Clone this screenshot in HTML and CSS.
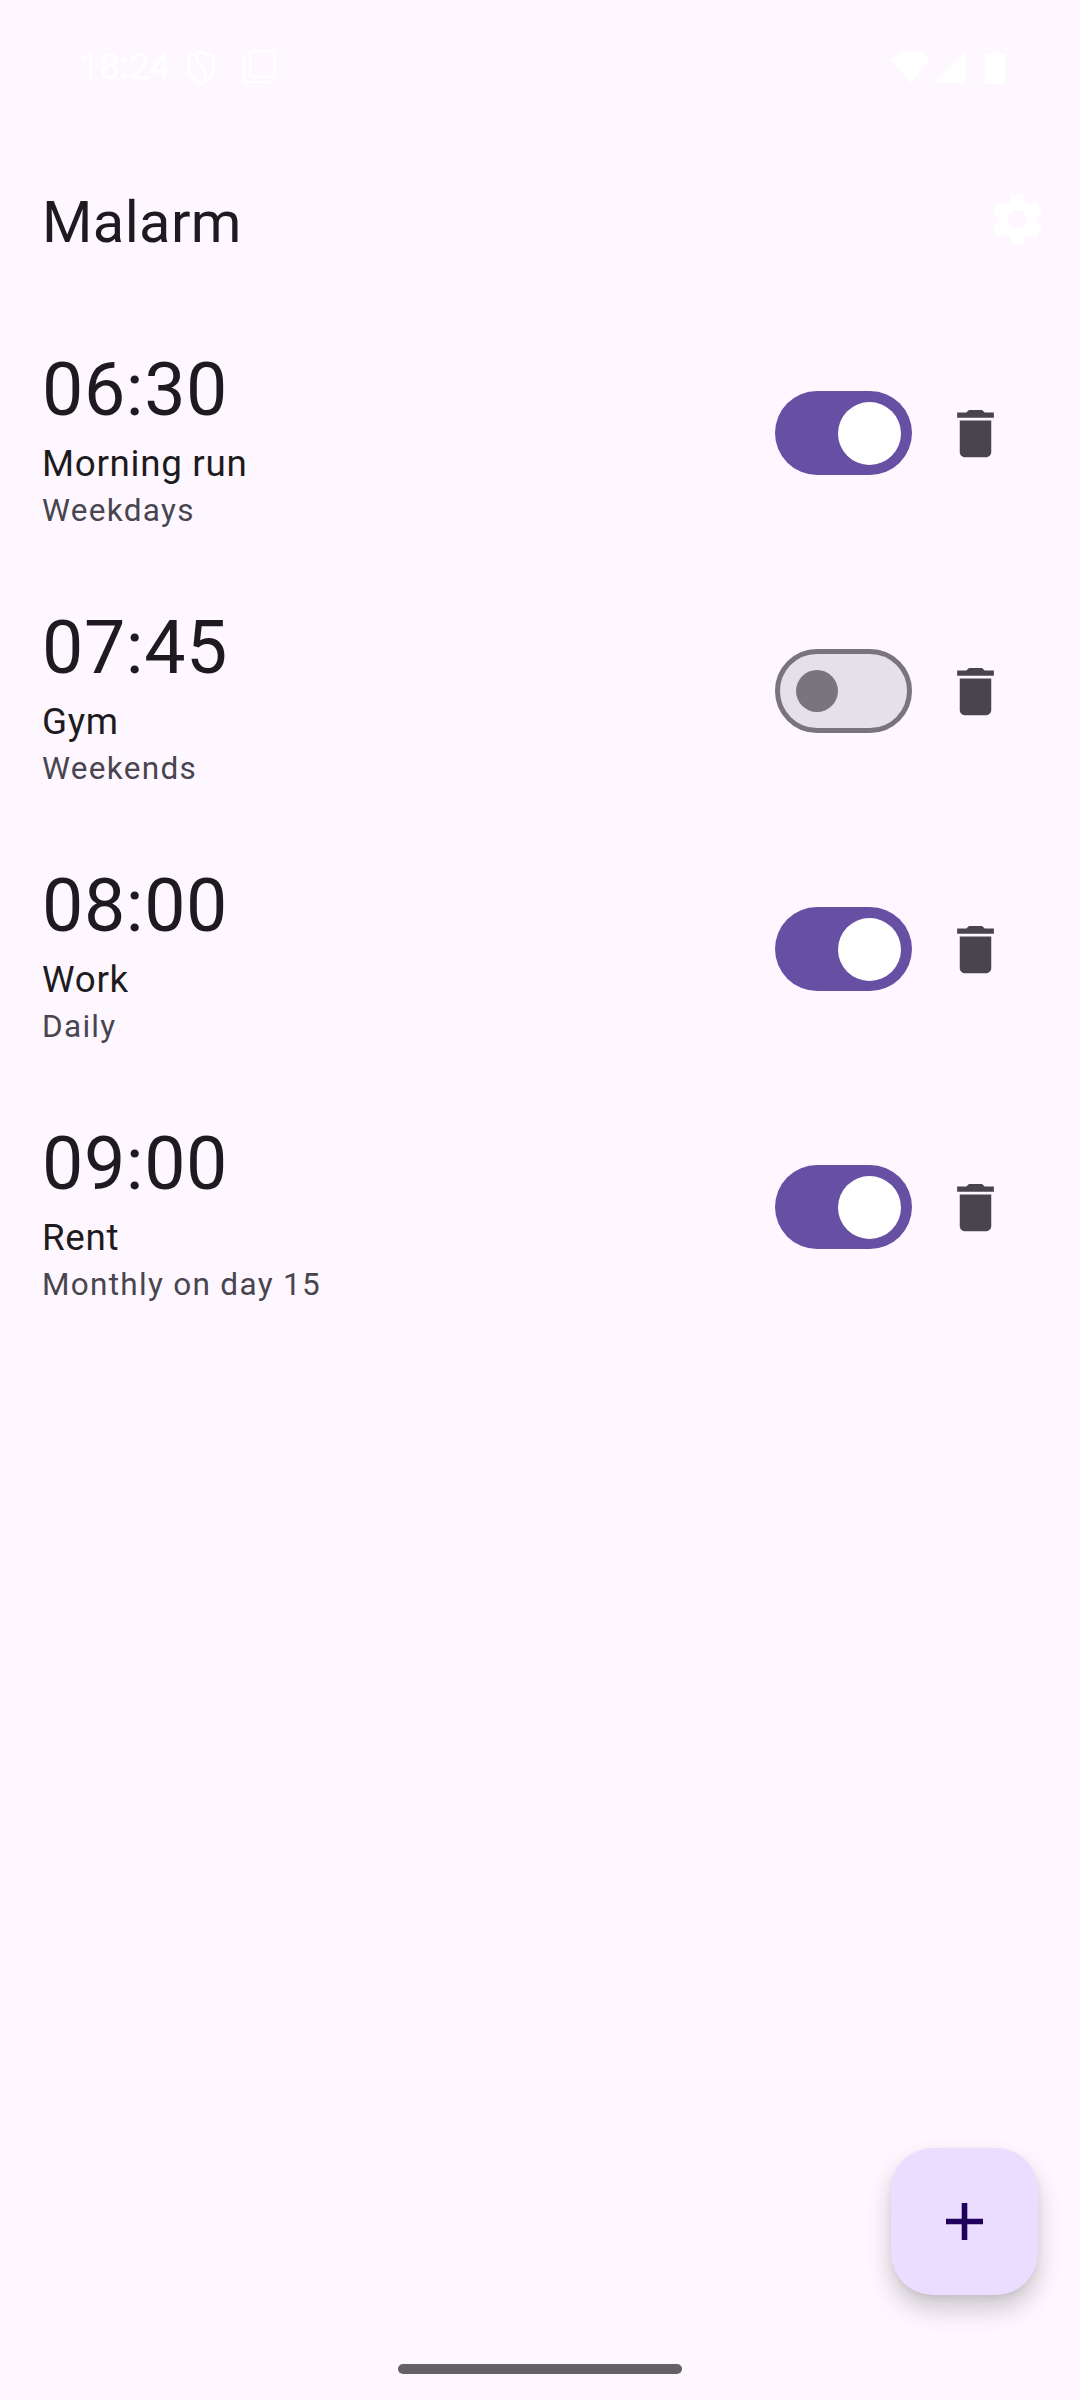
FILE: index.html
```html
<!DOCTYPE html>
<html lang="en">
<head>
    <meta charset="UTF-8">
    <meta name="viewport" content="width=device-width, initial-scale=1.0">
    <title>Malarm</title>
    <link rel="stylesheet" href="styles.css">
</head>
<body>
    <div class="screen">
        <div class="status-bar">
            <div class="status-left">
                <span class="status-time">18:24</span>
                <svg class="icon-shield" viewBox="0 0 28 35" fill="none" stroke="#fff" stroke-width="3">
                    <path d="M14 1.8 L26.5 6 V17 C26.5 25 21 31 14 33.2 C7 31 1.5 25 1.5 17 V6 Z"/>
                    <path d="M11 3 C8 8 9 12 14 16 C19 20 20 24 17 32"/>
                </svg>
                <svg class="icon-recents" viewBox="0 0 34 34" fill="none" stroke="#fff" stroke-width="2.6">
                    <rect x="8" y="1.5" width="24.5" height="25"/>
                    <path d="M2 6 V32 H28"/>
                </svg>
            </div>
            <div class="status-right">
                <svg class="icon-wifi" viewBox="0 0 39 32" fill="#fff"><path d="M0 9 C10 -3 29 -3 39 9 L19.5 32 Z"/></svg>
                <svg class="icon-signal" viewBox="0 0 33 32" fill="#fff"><path d="M33 0 V32 H0 Z"/></svg>
                <svg class="icon-battery" viewBox="0 0 20 33" fill="#fff"><path d="M6 0 H14 V3 H20 V33 H0 V3 H6 Z"/></svg>
            </div>
        </div>

        <div class="top-bar">
            <h1 class="app-title">Malarm</h1>
            <button class="icon-button">
                <svg class="icon-settings" viewBox="0 0 24 24" fill="#fff"><path d="M19.14 12.94c.04-.3.06-.61.06-.94 0-.32-.02-.64-.07-.94l2.03-1.58c.18-.14.23-.41.12-.61l-1.92-3.32c-.12-.22-.37-.29-.59-.22l-2.39.96c-.5-.38-1.03-.7-1.62-.94l-.36-2.54c-.04-.24-.24-.41-.48-.41h-3.84c-.24 0-.43.17-.47.41l-.36 2.54c-.59.24-1.13.57-1.62.94l-2.39-.96c-.22-.08-.47 0-.59.22L2.74 8.87c-.12.21-.08.47.12.61l2.03 1.58c-.05.3-.09.63-.09.94s.02.64.07.94l-2.03 1.58c-.18.14-.23.41-.12.61l1.92 3.32c.12.22.37.29.59.22l2.39-.96c.5.38 1.03.7 1.62.94l.36 2.54c.05.24.24.41.48.41h3.84c.24 0 .44-.17.47-.41l.36-2.54c.59-.24 1.13-.56 1.62-.94l2.39.96c.22.08.47 0 .59-.22l1.92-3.32c.12-.22.07-.47-.12-.61l-2.01-1.58zM12 15.6c-1.98 0-3.6-1.62-3.6-3.6s1.62-3.6 3.6-3.6 3.6 1.62 3.6 3.6-1.62 3.6-3.6 3.6z"/></svg>
            </button>
        </div>

        <div class="alarm-list">
            <div class="alarm-row">
                <div class="alarm-text">
                    <div class="alarm-time">06:30</div>
                    <div class="alarm-name">Morning run</div>
                    <div class="alarm-repeat">Weekdays</div>
                </div>
                <div class="switch switch-on"><span class="thumb"></span></div>
                <button class="icon-button">
                    <svg class="icon-delete" viewBox="0 0 24 24" fill="#49454f"><path d="M6 19c0 1.1.9 2 2 2h8c1.1 0 2-.9 2-2V7H6v12zM19 4h-3.5l-1-1h-5l-1 1H5v2h14V4z"/></svg>
                </button>
            </div>
            <div class="alarm-row">
                <div class="alarm-text">
                    <div class="alarm-time">07:45</div>
                    <div class="alarm-name">Gym</div>
                    <div class="alarm-repeat">Weekends</div>
                </div>
                <div class="switch switch-off"><span class="thumb"></span></div>
                <button class="icon-button">
                    <svg class="icon-delete" viewBox="0 0 24 24" fill="#49454f"><path d="M6 19c0 1.1.9 2 2 2h8c1.1 0 2-.9 2-2V7H6v12zM19 4h-3.5l-1-1h-5l-1 1H5v2h14V4z"/></svg>
                </button>
            </div>
            <div class="alarm-row">
                <div class="alarm-text">
                    <div class="alarm-time">08:00</div>
                    <div class="alarm-name">Work</div>
                    <div class="alarm-repeat">Daily</div>
                </div>
                <div class="switch switch-on"><span class="thumb"></span></div>
                <button class="icon-button">
                    <svg class="icon-delete" viewBox="0 0 24 24" fill="#49454f"><path d="M6 19c0 1.1.9 2 2 2h8c1.1 0 2-.9 2-2V7H6v12zM19 4h-3.5l-1-1h-5l-1 1H5v2h14V4z"/></svg>
                </button>
            </div>
            <div class="alarm-row">
                <div class="alarm-text">
                    <div class="alarm-time">09:00</div>
                    <div class="alarm-name">Rent</div>
                    <div class="alarm-repeat">Monthly on day 15</div>
                </div>
                <div class="switch switch-on"><span class="thumb"></span></div>
                <button class="icon-button">
                    <svg class="icon-delete" viewBox="0 0 24 24" fill="#49454f"><path d="M6 19c0 1.1.9 2 2 2h8c1.1 0 2-.9 2-2V7H6v12zM19 4h-3.5l-1-1h-5l-1 1H5v2h14V4z"/></svg>
                </button>
            </div>
        </div>

        <div class="nav-handle"></div>

        <button class="fab">
            <svg class="icon-add" viewBox="0 0 37 37" fill="#21005d"><path d="M15.7 0 H21.3 V15.7 H37 V21.3 H21.3 V37 H15.7 V21.3 H0 V15.7 H15.7 Z"/></svg>
        </button>
    </div>
</body>
</html>
```

FILE: styles.css
```css
body {
    margin: 0;
    background-color: #fef7ff;
    font-family: Roboto, "Liberation Sans", sans-serif;
}
.screen {
    position: relative;
    display: flex;
    flex-direction: column;
    width: 1080px;
    height: 2400px;
    overflow: hidden;
}
.status-bar {
    display: flex;
    justify-content: space-between;
    align-items: center;
    box-sizing: border-box;
    height: 134px;
    padding: 0 75px 0 79px;
}
.status-left,
.status-right {
    display: flex;
    align-items: center;
}
.status-time {
    color: #fff;
    font-size: 36.75px;
    line-height: 36px;
    width: 108px;
}
.icon-shield {
    width: 28px;
    height: 35px;
    margin-right: 27px;
}
.icon-recents {
    width: 34px;
    height: 34px;
}
.icon-wifi {
    width: 39px;
    height: 32px;
    margin-right: 3px;
}
.icon-signal {
    width: 33px;
    height: 32px;
    margin-right: 19px;
}
.icon-battery {
    width: 20px;
    height: 33px;
}
.top-bar {
    display: flex;
    justify-content: space-between;
    align-items: center;
    height: 170px;
    padding-left: 42px;
}
.app-title {
    margin: 6px 0 0;
    color: #1d1b20;
    font-size: 57.75px;
    font-weight: 400;
    letter-spacing: 0.4px;
    line-height: 74px;
}
.icon-button {
    display: flex;
    justify-content: center;
    align-items: center;
    width: 126px;
    height: 126px;
    padding: 0;
    border: none;
    background: none;
}
.icon-settings {
    width: 63px;
    height: 63px;
}
.icon-delete {
    width: 63px;
    height: 63px;
}
.alarm-list {
    flex: 1;
}
.alarm-row {
    display: flex;
    align-items: center;
    height: 258px;
    padding: 0 42px;
}
.alarm-text {
    flex: 1;
    padding-top: 9px;
}
.alarm-time {
    color: #1d1b20;
    font-size: 73.5px;
    letter-spacing: 0.6px;
    line-height: 94px;
}
.alarm-name {
    margin-top: 2px;
    color: #1d1b20;
    font-size: 36.75px;
    letter-spacing: 0.7px;
    line-height: 50px;
}
.alarm-repeat {
    color: #49454f;
    font-size: 31.5px;
    letter-spacing: 1.3px;
    line-height: 44px;
}
.switch {
    display: flex;
    align-items: center;
    box-sizing: border-box;
    width: 137px;
    height: 84px;
    border-radius: 42px;
}
.switch-on {
    justify-content: flex-end;
    padding-right: 11px;
    background: #6750a4;
}
.switch-on .thumb {
    width: 63px;
    height: 63px;
    background: #fff;
}
.switch-off {
    padding-left: 16px;
    border: 5px solid #79747e;
    background: #e6e0e9;
}
.switch-off .thumb {
    width: 42px;
    height: 42px;
    background: #79747e;
}
.thumb {
    border-radius: 50%;
}
.nav-handle {
    align-self: center;
    width: 284px;
    height: 10px;
    margin-bottom: 26px;
    border-radius: 5px;
    background: #656265;
}
.fab {
    position: absolute;
    left: 891px;
    top: 2148px;
    display: flex;
    justify-content: center;
    align-items: center;
    width: 147px;
    height: 147px;
    padding: 0;
    border: none;
    border-radius: 42px;
    background: #eaddff;
    box-shadow: 0 14px 26px rgba(0, 0, 0, 0.2), 0 3px 6px rgba(0, 0, 0, 0.06);
}
.icon-add {
    width: 37px;
    height: 37px;
}
```
